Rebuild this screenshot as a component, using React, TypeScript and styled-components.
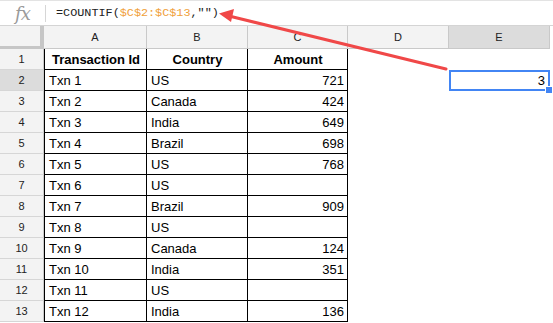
import React from "react";
import styled, { createGlobalStyle } from "styled-components";

const GlobalStyle = createGlobalStyle`
  html, body {
    margin: 0;
    padding: 0;
    background: #fff;
    font-family: "Liberation Sans", Arial, sans-serif;
  }
`;

const Page = styled.div`
  position: relative;
  width: 553px;
  height: 323px;
  overflow: hidden;
  background: #fff;
`;

const FormulaBar = styled.div`
  display: flex;
  align-items: center;
  height: 26px;
  border-top: 1px solid #e3e3e3;
  border-bottom: 1px solid #d4d4d4;
  box-sizing: border-box;
`;

const FxLabel = styled.div`
  width: 45px;
  display: flex;
  justify-content: center;
  align-items: center;
  font-family: "DejaVu Serif", "Liberation Serif", serif;
  font-style: italic;
  font-size: 18px;
  color: #9a9a9a;
  letter-spacing: -1px;
`;

const Divider = styled.div`
  width: 1px;
  height: 17px;
  background: #d6d6d6;
`;

const FormulaText = styled.div`
  padding-left: 10px;
  font-family: "Liberation Mono", "DejaVu Sans Mono", monospace;
  font-size: 11.8px;
  color: #222;
  white-space: pre;
`;

const Ref = styled.span`
  color: #f0a03a;
`;

const Grid = styled.div`
  display: grid;
  grid-template-columns: 44px 103px 101px 100px 101px 101px 3px;
  grid-template-rows: 23px repeat(13, 21px);
`;

const Corner = styled.div`
  background: #f3f3f3;
  border-right: 4px solid #c6c6c6;
  border-bottom: 3px solid #c6c6c6;
  box-sizing: border-box;
`;

const ColHead = styled.div<{ $active?: boolean }>`
  display: flex;
  align-items: center;
  justify-content: center;
  background: ${({ $active }) => ($active ? "#dcdcdc" : "#f3f3f3")};
  border-right: 1px solid #c9c9c9;
  border-bottom: 1px solid #c9c9c9;
  box-sizing: border-box;
  font-size: 11px;
  color: #222;
`;

const RowHead = styled.div<{ $active?: boolean }>`
  display: flex;
  align-items: center;
  justify-content: center;
  background: ${({ $active }) => ($active ? "#dcdcdc" : "#f3f3f3")};
  border-right: 1px solid #c9c9c9;
  border-bottom: 1px solid #d6d6d6;
  box-sizing: border-box;
  font-size: 11px;
  color: #222;
`;

const Cell = styled.div<{ $align?: "left" | "right" | "center"; $bold?: boolean; $first?: boolean }>`
  display: flex;
  align-items: center;
  justify-content: ${({ $align }) =>
    $align === "right" ? "flex-end" : $align === "center" ? "center" : "flex-start"};
  padding: 0 3px 0 4px;
  border-right: 1px solid #000;
  border-bottom: 1px solid #000;
  border-left: ${({ $first }) => ($first ? "1px solid #000" : "none")};
  box-sizing: border-box;
  font-size: 13px;
  font-weight: ${({ $bold }) => ($bold ? "bold" : "normal")};
  color: #000;
  white-space: nowrap;
  overflow: hidden;
`;

const Blank = styled.div`
  background: #fff;
`;

const Selected = styled.div`
  position: relative;
  display: flex;
  align-items: center;
  justify-content: flex-end;
  padding-right: 3px;
  border: 2px solid #4285f4;
  box-sizing: border-box;
  font-size: 13px;
  color: #000;
`;

const Handle = styled.div`
  position: absolute;
  right: -5px;
  bottom: -5px;
  width: 6px;
  height: 6px;
  background: #4285f4;
  border: 1px solid #fff;
`;

const Arrow = styled.svg`
  position: absolute;
  left: 0;
  top: 0;
  pointer-events: none;
`;

const rows: [string, string, string][] = [
  ["Txn 1", "US", "721"],
  ["Txn 2", "Canada", "424"],
  ["Txn 3", "India", "649"],
  ["Txn 4", "Brazil", "698"],
  ["Txn 5", "US", "768"],
  ["Txn 6", "US", ""],
  ["Txn 7", "Brazil", "909"],
  ["Txn 8", "US", ""],
  ["Txn 9", "Canada", "124"],
  ["Txn 10", "India", "351"],
  ["Txn 11", "US", ""],
  ["Txn 12", "India", "136"],
];

export default function App() {
  return (
    <Page>
      <GlobalStyle />
      <FormulaBar>
        <FxLabel>fx</FxLabel>
        <Divider />
        <FormulaText>
          =COUNTIF(<Ref>$C$2:$C$13</Ref>,"")
        </FormulaText>
      </FormulaBar>

      <Grid>
        <Corner />
        {["A", "B", "C", "D", "E"].map((c) => (
          <ColHead key={c} $active={c === "E"}>{c}</ColHead>
        ))}
        <Blank />

        <RowHead>1</RowHead>
        <Cell $first $align="center" $bold>Transaction Id</Cell>
        <Cell $align="center" $bold>Country</Cell>
        <Cell $align="center" $bold>Amount</Cell>
        <Blank />
        <Blank />
        <Blank />

        {rows.map(([id, country, amount], i) => (
          <React.Fragment key={id}>
            <RowHead $active={i === 0}>{i + 2}</RowHead>
            <Cell $first>{id}</Cell>
            <Cell>{country}</Cell>
            <Cell $align="right">{amount}</Cell>
            <Blank />
            {i === 0 ? (
              <Selected>
                3
                <Handle />
              </Selected>
            ) : (
              <Blank />
            )}
            <Blank />
          </React.Fragment>
        ))}
      </Grid>

      <Arrow width="553" height="323" viewBox="0 0 553 323">
        <line x1="446" y1="69" x2="229" y2="16" stroke="#f04848" strokeWidth="3" strokeLinecap="round" />
        <polygon points="219,13.5 234,9 231,22" fill="#f04848" />
      </Arrow>
    </Page>
  );
}
